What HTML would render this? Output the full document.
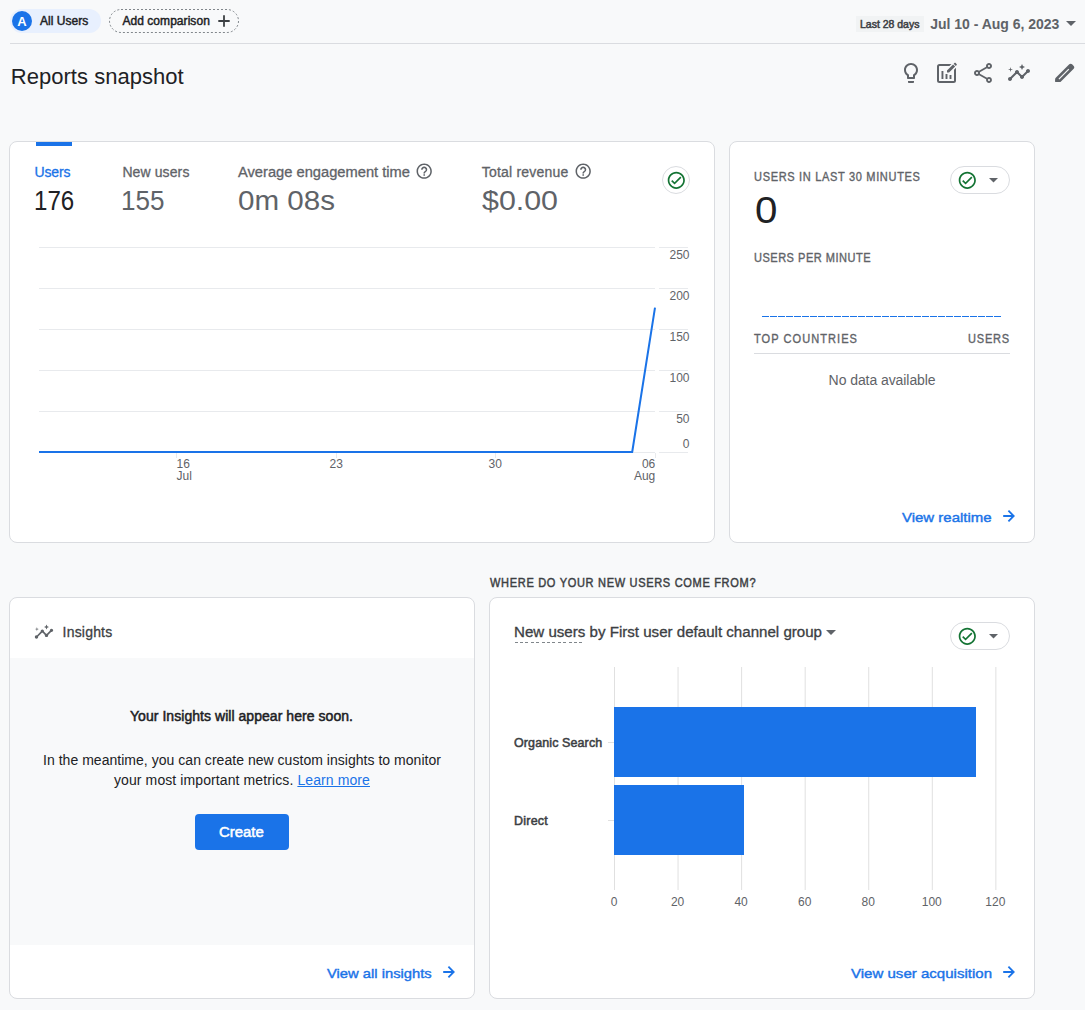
<!DOCTYPE html>
<html lang="en">
<head>
<meta charset="utf-8">
<title>Reports snapshot</title>
<style>
*{box-sizing:border-box;margin:0;padding:0}
html,body{width:1085px;height:1010px;overflow:hidden;background:#f8f9fa}
body{position:relative;font-family:"Liberation Sans",sans-serif;color:#202124}
.a{position:absolute}
.t{position:absolute;white-space:pre;line-height:1;transform-origin:0 50%}
.card{position:absolute;background:#fff;border:1px solid #dadce0;border-radius:8px}
.pill{position:absolute;background:#fff;border:1px solid #dadce0;border-radius:14px;height:28px}
svg{position:absolute;overflow:visible}
</style>
</head>
<body>
<!-- ===== top bar ===== -->
<div class="a" style="left:10px;top:9px;width:91px;height:24px;border-radius:12px;background:#e8f0fe"></div>
<div class="a" style="left:12px;top:11px;width:20px;height:20px;border-radius:10px;background:#1a73e8"></div>
<svg style="left:109px;top:9px" width="130" height="24" viewBox="0 0 130 24"><rect x=".5" y=".5" width="129" height="23" rx="11.500" fill="none" stroke="#80868b" stroke-width="1" stroke-dasharray="2 2"/></svg>
<svg style="left:218px;top:15px" width="12" height="12" viewBox="0 0 12 12"><path d="M6 .3V11.700M.3 6H11.700" stroke="#3c4043" stroke-width="1.800" fill="none"/></svg>
<div class="a" style="left:856px;top:16px;width:68px;height:16px;background:#f1f3f4"></div>
<svg style="left:1066px;top:21px" width="10" height="5" viewBox="0 0 10 5"><path d="M0 0H10L5 5Z" fill="#5f6368"/></svg>
<div class="a" style="left:10px;top:43px;width:1075px;height:1px;background:#dadce0"></div>

<!-- ===== title-row icons (24px boxes) ===== -->
<svg style="left:899.400px;top:61px" width="24" height="24" viewBox="0 0 24 24" fill="#5f6368"><path d="M9 21c0 .55.45 1 1 1h4c.55 0 1-.45 1-1v-1H9v1zm3-19C8.14 2 5 5.14 5 9c0 2.38 1.19 4.47 3 5.74V17c0 .55.45 1 1 1h6c.55 0 1-.45 1-1v-2.260c1.81-1.27 3-3.36 3-5.74 0-3.860-3.140-7-7-7zm2.850 11.100l-.85.6V16h-4v-2.300l-.85-.6C7.800 12.160 7 10.630 7 9c0-2.760 2.240-5 5-5s5 2.240 5 5c0 1.630-.8 3.160-2.150 4.100z"/></svg>
<svg style="left:935px;top:61px" width="24" height="24" viewBox="0 0 24 24" fill="none"><rect x="3" y="4" width="17" height="17" rx="1.500" stroke="#5f6368" stroke-width="2"/><path d="M7.450 10.100v7.800M11.500 13.100v4.800M15.500 14.100v3.800" stroke="#5f6368" stroke-width="1.900"/><g transform="translate(10.350 .05) scale(.55)"><path d="M3 17.250V21h3.750L17.810 9.940l-3.750-3.750L3 17.250zM20.710 7.040c.39-.39.39-1.020 0-1.410l-2.340-2.340c-.39-.39-1.020-.39-1.410 0l-1.830 1.830 3.750 3.750 1.830-1.830z" fill="#f8f9fa" stroke="#f8f9fa" stroke-width="5.500" stroke-linejoin="round"/><path d="M3 17.250V21h3.750L17.810 9.940l-3.750-3.750L3 17.250zM20.710 7.040c.39-.39.39-1.020 0-1.410l-2.340-2.340c-.39-.39-1.020-.39-1.410 0l-1.830 1.830 3.750 3.750 1.830-1.830z" fill="#5f6368"/></g></svg>
<svg style="left:971px;top:61px" width="24" height="24" viewBox="0 0 24 24" fill="#5f6368"><path d="M18 16.080c-.76 0-1.440.3-1.960.77L8.910 12.700c.05-.23.09-.46.09-.7s-.04-.47-.09-.7l7.050-4.110c.54.5 1.250.81 2.040.81 1.660 0 3-1.340 3-3s-1.340-3-3-3-3 1.340-3 3c0 .24.04.47.09.7L8.040 9.810C7.500 9.310 6.790 9 6 9c-1.660 0-3 1.340-3 3s1.340 3 3 3c.79 0 1.500-.31 2.040-.81l7.120 4.160c-.05.21-.08.43-.08.65 0 1.610 1.310 2.920 2.920 2.920s2.920-1.310 2.920-2.920c0-1.610-1.310-2.920-2.920-2.920zM18 4c.55 0 1 .45 1 1s-.45 1-1 1-1-.45-1-1 .45-1 1-1zM6 13c-.55 0-1-.45-1-1s.45-1 1-1 1 .45 1 1-.45 1-1 1zm12 7.020c-.55 0-1-.45-1-1s.45-1 1-1 1 .45 1 1-.45 1-1 1z"/></svg>
<svg style="left:1007px;top:61px" width="24" height="24" viewBox="0 0 24 24" fill="#5f6368"><path d="M21 8c-1.450 0-2.260 1.440-1.930 2.510l-3.550 3.560c-.3-.09-.74-.09-1.040 0l-2.550-2.550C12.270 10.450 11.460 9 10 9c-1.450 0-2.270 1.440-1.930 2.520l-4.560 4.550C2.440 15.740 1 16.550 1 18c0 1.100.9 2 2 2 1.450 0 2.260-1.440 1.930-2.510l4.550-4.560c.3.09.74.09 1.040 0l2.550 2.550C12.730 16.550 13.540 18 15 18c1.450 0 2.270-1.440 1.930-2.520l3.560-3.550c1.070.33 2.510-.48 2.510-1.930 0-1.100-.9-2-2-2z"/><path d="M15 9l.94-2.070L18 6l-2.060-.93L15 3l-.92 2.070L12 6l2.080.93z"/><path d="M3.500 11L4 9l2-.5L4 8l-.5-2L3 8l-2 .5L3 9z"/></svg>
<svg style="left:1052px;top:61px" width="24" height="24" viewBox="0 0 24 24"><path d="M4.250 20.040V17.710L17.960 4A1 1 0 0 1 19.380 4L21 5.620A1 1 0 0 1 21 7.040L8 20.040Z" fill="#5f6368" stroke="#5f6368" stroke-width="2" stroke-linejoin="round"/><path d="M3.250 21.040v-3l3 3z" fill="#5f6368"/><path d="M6.900 18.100L16.800 8.200" stroke="#f8f9fa" stroke-width="1.200"/></svg>

<!-- ===== card 1 : overview ===== -->
<div class="card" style="left:9px;top:141px;width:706px;height:402px"></div>
<div class="a" style="left:36px;top:142px;width:36px;height:4px;background:#1a73e8"></div>
<!-- help icons -->
<svg style="left:415.40px;top:161.70px" width="18.400" height="18.400" viewBox="0 0 24 24"><path d="M11 18h2v-2h-2v2zm1-16C6.480 2 2 6.480 2 12s4.480 10 10 10 10-4.480 10-10S17.520 2 12 2zm0 18c-4.410 0-8-3.590-8-8s3.590-8 8-8 8 3.590 8 8-3.590 8-8 8zm0-14c-2.210 0-4 1.790-4 4h2c0-1.100.9-2 2-2s2 .9 2 2c0 2-3 1.750-3 5h2c0-2.250 3-2.500 3-5 0-2.210-1.790-4-4-4z" fill="#5f6368"/></svg>
<svg style="left:574.10px;top:161.70px" width="18.400" height="18.400" viewBox="0 0 24 24"><path d="M11 18h2v-2h-2v2zm1-16C6.480 2 2 6.480 2 12s4.480 10 10 10 10-4.480 10-10S17.520 2 12 2zm0 18c-4.410 0-8-3.590-8-8s3.590-8 8-8 8 3.590 8 8-3.590 8-8 8zm0-14c-2.210 0-4 1.790-4 4h2c0-1.100.9-2 2-2s2 .9 2 2c0 2-3 1.750-3 5h2c0-2.250 3-2.500 3-5 0-2.210-1.790-4-4-4z" fill="#5f6368"/></svg>
<!-- status check -->
<div class="pill" style="left:662px;top:166px;width:28px"></div>
<svg style="left:665.80px;top:169.70px" width="20.600" height="20.600" viewBox="0 0 24 24"><path d="M16.590 7.580L10 14.170l-2.590-2.580L6 13l4 4 8-8zM12 2C6.480 2 2 6.480 2 12s4.480 10 10 10 10-4.480 10-10S17.520 2 12 2zm0 18c-4.420 0-8-3.580-8-8s3.580-8 8-8 8 3.580 8 8-3.580 8-8 8z" fill="#137333"/></svg>
<!-- line chart -->
<svg style="left:0;top:0" width="720" height="500" viewBox="0 0 720 500" shape-rendering="crispEdges">
<g stroke="#e8eaed" stroke-width="1"><path d="M39 247.500H655M39 288.500H655M39 329.500H655M39 370.500H655M39 411.500H655M39 452.500H655"/><path d="M659 247.500H688M659 288.500H688M659 329.500H688M659 370.500H688M659 411.500H688M659 452.500H688"/><path d="M176.500 453v5M336.500 453v5M495.500 453v5M655.500 453v5"/></g>
<path d="M39 452H632.200L655 307.700" fill="none" stroke="#1a73e8" stroke-width="2" stroke-linejoin="round" shape-rendering="geometricPrecision"/>
</svg>

<!-- ===== card 2 : realtime ===== -->
<div class="card" style="left:729px;top:141px;width:306px;height:402px"></div>
<div class="pill" style="left:950px;top:166px;width:60px"></div>
<svg style="left:956.90px;top:169.70px" width="20.600" height="20.600" viewBox="0 0 24 24"><path d="M16.590 7.580L10 14.170l-2.590-2.580L6 13l4 4 8-8zM12 2C6.480 2 2 6.480 2 12s4.480 10 10 10 10-4.480 10-10S17.520 2 12 2zm0 18c-4.420 0-8-3.580-8-8s3.580-8 8-8 8 3.580 8 8-3.580 8-8 8z" fill="#137333"/></svg>
<svg style="left:989px;top:178.2px" width="9" height="4.500" viewBox="0 0 10 5"><path d="M0 0H10L5 5Z" fill="#5f6368"/></svg>
<svg style="left:762px;top:316px" width="240" height="2" viewBox="0 0 240 2" shape-rendering="crispEdges"><path d="M0 .5H240" stroke="#1a73e8" stroke-width="1" stroke-dasharray="7 1"/></svg>
<div class="a" style="left:754px;top:353px;width:256px;height:1px;background:#dadce0"></div>
<svg style="left:1003.1px;top:510.3px" width="12" height="12" viewBox="0 0 12 12"><path d="M.2 6H10.800M5.400.7L10.700 6 5.400 11.300" fill="none" stroke="#1a73e8" stroke-width="1.800"/></svg>

<!-- ===== card 3 : insights ===== -->
<div class="card" style="left:9px;top:597px;width:466px;height:402px"></div>
<div class="a" style="left:10px;top:658px;width:464px;height:287px;background:#f8f9fa"></div>
<svg style="left:34px;top:621.800px" width="20" height="20" viewBox="0 0 24 24" fill="#5f6368"><path d="M21 8c-1.450 0-2.260 1.440-1.930 2.510l-3.550 3.560c-.3-.09-.74-.09-1.040 0l-2.550-2.550C12.270 10.450 11.460 9 10 9c-1.450 0-2.270 1.440-1.930 2.520l-4.560 4.550C2.440 15.740 1 16.550 1 18c0 1.100.9 2 2 2 1.450 0 2.260-1.440 1.930-2.510l4.550-4.560c.3.09.74.09 1.040 0l2.550 2.550C12.730 16.550 13.540 18 15 18c1.450 0 2.270-1.440 1.930-2.520l3.560-3.550c1.070.33 2.510-.48 2.510-1.930 0-1.100-.9-2-2-2z"/><path d="M15 9l.94-2.070L18 6l-2.060-.93L15 3l-.92 2.070L12 6l2.080.93z"/><path d="M3.500 11L4 9l2-.5L4 8l-.5-2L3 8l-2 .5L3 9z"/></svg>
<div class="a" style="left:195px;top:814px;width:94px;height:36px;border-radius:4px;background:#1a73e8"></div>
<svg style="left:443.1px;top:966.3px" width="12" height="12" viewBox="0 0 12 12"><path d="M.2 6H10.800M5.400.7L10.700 6 5.400 11.300" fill="none" stroke="#1a73e8" stroke-width="1.800"/></svg>

<!-- ===== card 4 : acquisition ===== -->
<div class="card" style="left:489px;top:597px;width:546px;height:402px"></div>
<svg style="left:514px;top:641.500px" width="70" height="1" viewBox="0 0 70 1" shape-rendering="crispEdges"><path d="M.5 .5H69.500" stroke="#80868b" stroke-width="1" stroke-dasharray="3 2.400"/></svg>
<svg style="left:826px;top:630px" width="10" height="5" viewBox="0 0 10 5"><path d="M0 0H10L5 5Z" fill="#5f6368"/></svg>
<div class="pill" style="left:950px;top:622px;width:60px"></div>
<svg style="left:956.90px;top:625.70px" width="20.600" height="20.600" viewBox="0 0 24 24"><path d="M16.590 7.580L10 14.170l-2.590-2.580L6 13l4 4 8-8zM12 2C6.480 2 2 6.480 2 12s4.480 10 10 10 10-4.480 10-10S17.520 2 12 2zm0 18c-4.420 0-8-3.580-8-8s3.580-8 8-8 8 3.580 8 8-3.580 8-8 8z" fill="#137333"/></svg>
<svg style="left:989px;top:634.2px" width="9" height="4.500" viewBox="0 0 10 5"><path d="M0 0H10L5 5Z" fill="#5f6368"/></svg>
<svg style="left:0;top:0" width="1085" height="1010" viewBox="0 0 1085 1010" shape-rendering="crispEdges">
<g stroke="#e0e0e0" stroke-width="1"><path shape-rendering="geometricPrecision" d="M614.50 667V890M678.06 667V890M741.62 667V890M805.18 667V890M868.74 667V890M932.30 667V890M995.86 667V890"/><path d="M608 742.500H614M608 820.500H614"/></g>
<rect x="614" y="707" width="362" height="69.500" fill="#1a73e8"/>
<rect x="614" y="784.500" width="130.300" height="70" fill="#1a73e8"/>
</svg>
<svg style="left:1003.1px;top:966.3px" width="12" height="12" viewBox="0 0 12 12"><path d="M.2 6H10.800M5.400.7L10.700 6 5.400 11.300" fill="none" stroke="#1a73e8" stroke-width="1.800"/></svg>

<div class="t" style="left:17.30px;top:14.60px;font-size:13px;color:#fff;font-weight:700">A</div>
<div class="t" style="left:40.00px;top:14.84px;font-size:12px;color:#202124;letter-spacing:0.032px;-webkit-text-stroke:0.45px #202124">All Users</div>
<div class="t" style="left:122.40px;top:14.84px;font-size:12px;color:#202124;letter-spacing:0.056px;-webkit-text-stroke:0.45px #202124">Add comparison</div>
<div class="t" style="left:860.00px;top:20.43px;font-size:10px;color:#3c4043;transform:scaleX(1.0473);-webkit-text-stroke:0.5px #3c4043">Last 28 days</div>
<div class="t" style="left:930.20px;top:16.95px;font-size:14px;color:#5f6368;font-weight:700;letter-spacing:-0.012px">Jul 10 - Aug 6, 2023</div>
<div class="t" style="left:10.80px;top:65.68px;font-size:22px;color:#202124;letter-spacing:0.023px">Reports snapshot</div>
<div class="t" style="left:34.50px;top:164.95px;font-size:14px;color:#1a73e8;letter-spacing:-0.153px;-webkit-text-stroke:0.3px #1a73e8">Users</div>
<div class="t" style="left:33.60px;top:186.70px;font-size:28px;color:#202124;transform:scaleX(0.8605)">176</div>
<div class="t" style="left:122.40px;top:164.95px;font-size:14px;color:#5f6368;letter-spacing:0.107px;-webkit-text-stroke:0.3px #5f6368">New users</div>
<div class="t" style="left:121.00px;top:186.70px;font-size:28px;color:#5f6368;transform:scaleX(0.9311)">155</div>
<div class="t" style="left:238.00px;top:164.95px;font-size:14px;color:#5f6368;transform:scaleX(1.0490);-webkit-text-stroke:0.3px #5f6368">Average engagement time</div>
<div class="t" style="left:238.00px;top:186.70px;font-size:28px;color:#5f6368;transform:scaleX(1.0563)">0m 08s</div>
<div class="t" style="left:481.80px;top:164.95px;font-size:14px;color:#5f6368;letter-spacing:0.195px;-webkit-text-stroke:0.3px #5f6368">Total revenue</div>
<div class="t" style="left:481.80px;top:186.70px;font-size:28px;color:#5f6368;transform:scaleX(1.0845)">$0.00</div>
<div class="t" style="left:669.47px;top:249.14px;font-size:12px;color:#5f6368">250</div>
<div class="t" style="left:669.47px;top:290.14px;font-size:12px;color:#5f6368">200</div>
<div class="t" style="left:669.47px;top:331.14px;font-size:12px;color:#5f6368">150</div>
<div class="t" style="left:669.47px;top:372.14px;font-size:12px;color:#5f6368">100</div>
<div class="t" style="left:676.14px;top:413.14px;font-size:12px;color:#5f6368">50</div>
<div class="t" style="left:682.81px;top:437.64px;font-size:12px;color:#5f6368">0</div>
<div class="t" style="left:176.60px;top:457.64px;font-size:12px;color:#5f6368">16</div>
<div class="t" style="left:176.60px;top:469.64px;font-size:12px;color:#5f6368">Jul</div>
<div class="t" style="left:329.52px;top:457.64px;font-size:12px;color:#5f6368">23</div>
<div class="t" style="left:488.62px;top:457.64px;font-size:12px;color:#5f6368">30</div>
<div class="t" style="left:641.94px;top:457.64px;font-size:12px;color:#5f6368">06</div>
<div class="t" style="left:633.94px;top:469.64px;font-size:12px;color:#5f6368">Aug</div>
<div class="t" style="left:754.00px;top:170.64px;font-size:12px;color:#5f6368;letter-spacing:0.719px;transform:scaleX(0.9200);-webkit-text-stroke:0.35px #5f6368">USERS IN LAST 30 MINUTES</div>
<div class="t" style="left:754.50px;top:192.53px;font-size:36px;color:#202124;transform:scaleX(1.1183)">0</div>
<div class="t" style="left:754.00px;top:251.94px;font-size:12px;color:#5f6368;letter-spacing:0.530px;transform:scaleX(0.9200);-webkit-text-stroke:0.35px #5f6368">USERS PER MINUTE</div>
<div class="t" style="left:754.00px;top:332.64px;font-size:12px;color:#5f6368;letter-spacing:1.138px;transform:scaleX(0.9200);-webkit-text-stroke:0.35px #5f6368">TOP COUNTRIES</div>
<div class="t" style="left:968.30px;top:332.64px;font-size:12px;color:#5f6368;letter-spacing:0.862px;transform:scaleX(0.9200);-webkit-text-stroke:0.35px #5f6368">USERS</div>
<div class="t" style="left:828.60px;top:372.95px;font-size:14px;color:#5f6368;letter-spacing:-0.070px">No data available</div>
<div class="t" style="left:902.00px;top:510.69px;font-size:13.6px;color:#1a73e8;transform:scaleX(1.1015);-webkit-text-stroke:0.4px #1a73e8">View realtime</div>
<div class="t" style="left:62.60px;top:624.95px;font-size:14px;color:#3c4043;letter-spacing:0.194px;-webkit-text-stroke:0.3px #3c4043">Insights</div>
<div class="t" style="left:130.00px;top:709.15px;font-size:14px;color:#202124;letter-spacing:0.047px;-webkit-text-stroke:0.5px #202124">Your Insights will appear here soon.</div>
<div class="t" style="left:43.00px;top:753.15px;font-size:14px;color:#202124;letter-spacing:0.031px">In the meantime, you can create new custom insights to monitor</div>
<div class="t" style="left:114.00px;top:773.15px;font-size:14px;color:#202124;letter-spacing:0.100px">your most important metrics. <span style="color:#1a73e8;text-decoration:underline">Learn more</span></div>
<div class="t" style="left:219.20px;top:825.15px;font-size:14px;color:#fff;transform:scaleX(1.0635);-webkit-text-stroke:0.5px #fff">Create</div>
<div class="t" style="left:326.60px;top:967.39px;font-size:13.6px;color:#1a73e8;transform:scaleX(1.0853);-webkit-text-stroke:0.4px #1a73e8">View all insights</div>
<div class="t" style="left:490.00px;top:577.04px;font-size:12px;color:#3c4043;letter-spacing:0.732px;transform:scaleX(0.9200);-webkit-text-stroke:0.45px #3c4043">WHERE DO YOUR NEW USERS COME FROM?</div>
<div class="t" style="left:514.30px;top:624.95px;font-size:14px;color:#3c4043;transform:scaleX(1.0785);-webkit-text-stroke:0.3px #3c4043">New users by First user default channel group</div>
<div class="t" style="left:514.30px;top:736.84px;font-size:12px;color:#3c4043;letter-spacing:0.109px;transform:scaleX(1.0400);-webkit-text-stroke:0.5px #3c4043">Organic Search</div>
<div class="t" style="left:514.30px;top:814.84px;font-size:12px;color:#3c4043;letter-spacing:0.225px;transform:scaleX(1.0400);-webkit-text-stroke:0.5px #3c4043">Direct</div>
<div class="t" style="left:851.40px;top:967.39px;font-size:13.6px;color:#1a73e8;transform:scaleX(1.1063);-webkit-text-stroke:0.4px #1a73e8">View user acquisition</div>
<div class="t" style="left:610.66px;top:896.44px;font-size:12px;color:#5f6368">0</div>
<div class="t" style="left:670.88px;top:896.44px;font-size:12px;color:#5f6368">20</div>
<div class="t" style="left:734.44px;top:896.44px;font-size:12px;color:#5f6368">40</div>
<div class="t" style="left:798.00px;top:896.44px;font-size:12px;color:#5f6368">60</div>
<div class="t" style="left:861.56px;top:896.44px;font-size:12px;color:#5f6368">80</div>
<div class="t" style="left:921.78px;top:896.44px;font-size:12px;color:#5f6368">100</div>
<div class="t" style="left:985.34px;top:896.44px;font-size:12px;color:#5f6368">120</div>

</body>
</html>
